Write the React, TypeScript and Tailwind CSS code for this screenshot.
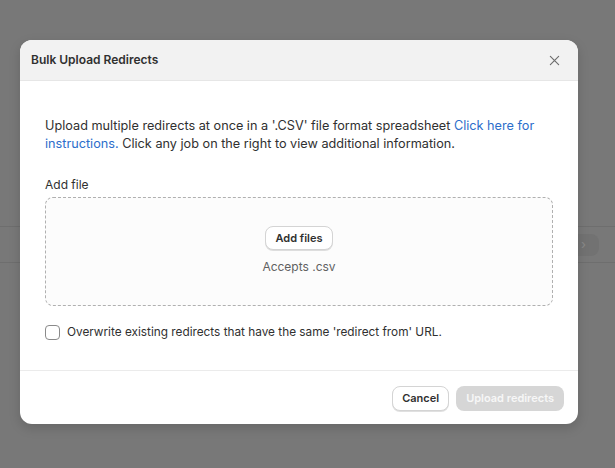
import { useState } from "react";

const CloseIcon = () => (
  <svg width="11" height="11" viewBox="0 0 12 12" fill="none">
    <path d="M1.5 1.5l9 9M10.5 1.5l-9 9" stroke="#707070" strokeWidth="1.3" strokeLinecap="round" />
  </svg>
);

const App = () => {
  const [overwrite, setOverwrite] = useState(false);

  return (
    <div
      className="relative w-[615px] h-[468px] overflow-hidden bg-[#787878]"
      style={{ fontFamily: "Inter, 'Noto Sans', sans-serif" }}
    >
      {/* Page behind the overlay */}
      <div className="pt-[226px]">
        <div className="h-[37px] border-y border-[#6e6e6e] flex items-center justify-end pr-[16px]">
          <div className="w-[40px] h-[22px] rounded-[8px] bg-[#727272] flex items-center pl-[22px] text-[#8a8a8a] text-[13px]">
            ›
          </div>
        </div>
      </div>

      {/* Modal */}
      <div className="absolute left-[20px] top-[40px] w-[558px] bg-white rounded-[12px] overflow-hidden shadow-[0_4px_12px_rgba(0,0,0,0.15)]">
        {/* Header */}
        <div className="h-[41px] bg-[#f2f2f2] border-b border-[#e6e6e6] flex items-center justify-between pl-[11px] pr-[14px]">
          <h2 className="text-[12px] font-semibold text-[#303030]">Bulk Upload Redirects</h2>
          <button className="w-[20px] h-[20px] flex items-center justify-center">
            <CloseIcon />
          </button>
        </div>

        {/* Body */}
        <div className="px-[25px] pt-[36px] pb-[29px] text-[12px] text-[#303030]">
          <p className="text-[12.7px] leading-[18px]">
            Upload multiple redirects at once in a '.CSV' file format spreadsheet{" "}
            <a className="text-[#2c6ecb]">Click here for instructions.</a> Click any job on the right
            to view additional information.
          </p>

          <div className="mt-[22px] leading-[20px]">Add file</div>
          <div className="mt-[2px] h-[109px] rounded-[8px] border border-dashed border-[#b0b0b0] bg-[#fcfcfc] flex flex-col items-center pt-[28px]">
            <button className="h-[24px] px-[10px] rounded-[8px] bg-white border border-[#d4d4d4] shadow-[0_1px_0_rgba(0,0,0,0.12)] text-[11px] font-semibold text-[#303030]">
              Add files
            </button>
            <div className="mt-[8px] text-[#616161] leading-[18px]">Accepts .csv</div>
          </div>

          <label className="mt-[17px] flex items-center gap-[7px] leading-[18px]">
            <span
              onClick={() => setOverwrite(!overwrite)}
              className="w-[15px] h-[15px] rounded-[4px] border border-[#8a8a8a] bg-white"
            />
            <span className="text-[11.8px]">
              Overwrite existing redirects that have the same 'redirect from' URL.
            </span>
          </label>
        </div>

        {/* Footer */}
        <div className="border-t border-[#ebebeb] flex justify-end gap-[7px] pt-[15px] pb-[13px] pr-[14px]">
          <button className="h-[25px] px-[9px] rounded-[8px] bg-white border border-[#d4d4d4] shadow-[0_1px_0_rgba(0,0,0,0.12)] text-[11px] font-semibold text-[#303030]">
            Cancel
          </button>
          <button className="h-[25px] px-[10px] rounded-[8px] bg-[#d6d6d6] text-[11px] font-semibold text-[#f7f7f7]">
            Upload redirects
          </button>
        </div>
      </div>
    </div>
  );
};

export default App;
